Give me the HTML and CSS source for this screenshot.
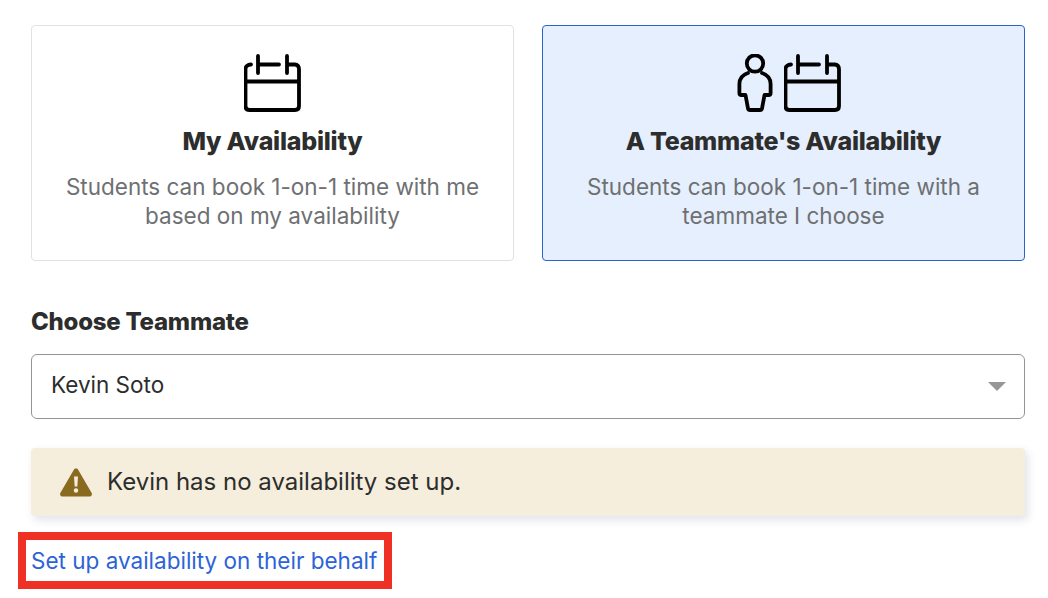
FILE: index.html
```html
<!DOCTYPE html>
<html lang="en">
<head>
<meta charset="utf-8">
<title>Availability</title>
<link rel="stylesheet" href="styles.css">
</head>
<body>
<main class="page">
  <section class="cards">
    <div class="card">
      <div class="icons">
        <svg class="cal" viewBox="1 0 58 58" fill="none"><path d="M8 10.500C4.500 10.500 2.500 12.500 2.500 15V52C2.500 54.500 4 56 6.500 56H52C54.500 56 56 54.500 56 52V15C56 12.500 54.500 10.500 52 10.500H44M15 2V19M44 2V19M15 10.500H36M2.500 27.500H56" stroke="#000" stroke-width="3.800" stroke-linecap="round" stroke-linejoin="round"/></svg>
      </div>
      <h2 class="card-title">My Availability</h2>
      <p class="card-text">Students can book 1-on-1 time with me based on my availability</p>
    </div>
    <div class="card selected">
      <div class="icons icons-pair">
        <svg class="person" viewBox="0 0 36 58" fill="none"><circle cx="18" cy="9.500" r="8.200" stroke="#000" stroke-width="3.800"/><path d="M11 19C5 21 2.400 25 2.400 30V39C2.400 40.500 3 41 4.500 41H8.500L11 54.500C11.300 55.700 12 56 13 56H23C24 56 24.700 55.700 25 54.500L27.500 41H31.500C33 41 33.600 40.500 33.600 39V30C33.600 25 31 21 25 19" stroke="#000" stroke-width="3.800" stroke-linecap="round" stroke-linejoin="round"/></svg>
        <svg class="cal" viewBox="1 0 58 58" fill="none"><path d="M8 10.500C4.500 10.500 2.500 12.500 2.500 15V52C2.500 54.500 4 56 6.500 56H52C54.500 56 56 54.500 56 52V15C56 12.500 54.500 10.500 52 10.500H44M15 2V19M44 2V19M15 10.500H36M2.500 27.500H56" stroke="#000" stroke-width="3.800" stroke-linecap="round" stroke-linejoin="round"/></svg>
      </div>
      <h2 class="card-title">A Teammate's Availability</h2>
      <p class="card-text">Students can book 1-on-1 time with a teammate I choose</p>
    </div>
  </section>
  <label class="label">Choose Teammate</label>
  <div class="select">
    <span class="select-value">Kevin Soto</span>
    <span class="caret"></span>
  </div>
  <div class="alert">
    <svg class="warn" viewBox="0 0 34 30"><path d="M17 1.500C18 1.500 18.800 2 19.300 2.900L32.700 26C33.500 27.500 32.500 29.500 30.700 29.500H3.300C1.500 29.500 .5 27.500 1.300 26L14.700 2.900C15.200 2 16 1.500 17 1.500Z" fill="#8a6a1f"/><path d="M15 9.500H19L18.300 19.500H15.700Z" fill="#f5eedc"/><circle cx="17" cy="23.500" r="2.200" fill="#f5eedc"/></svg>
    <span class="alert-text">Kevin has no availability set up.</span>
  </div>
  <a class="link" href="#">Set up availability on their behalf</a>
</main>
</body>
</html>
```
FILE: styles.css
```css
* { box-sizing: border-box; }
html, body { margin: 0; background: #fff; }
body { font-family: Inter, "Liberation Sans", sans-serif; color: #2d2d2d; }
.page { width: 1048px; height: 598px; padding: 25px 23px 0 31px; display: flex; flex-direction: column; overflow: hidden; }
.cards { display: flex; gap: 28px; }
.card { flex: 1 1 0; height: 236px; border: 1px solid #e2e2e2; border-radius: 4px; padding: 28px 20px 0; text-align: center; background: #fff; }
.card.selected { background: #e6effd; border-color: #2c64c6; }
.icons { display: flex; justify-content: center; align-items: flex-start; gap: 11px; height: 58px; }
.icons-pair { padding-left: 12px; }
.cal { width: 58px; height: 58px; display: block; }
.person { width: 36px; height: 58px; display: block; }
.card-title { margin: 13px 0 0; font-size: 25px; line-height: 32px; font-weight: 800; letter-spacing: -0.25px; }
.card-text { margin: 15px 0 0; font-size: 22.5px; line-height: 29px; color: #6e7072; }
.label { margin-top: 46px; font-size: 24px; line-height: 30px; font-weight: 800; letter-spacing: -0.25px; }
.select { margin-top: 17px; height: 65px; border: 1px solid #949494; border-radius: 6px; padding: 0 18px 0 19px; display: flex; align-items: center; justify-content: space-between; font-size: 22.5px; }
.select-value { margin-bottom: 4px; }
.caret { width: 0; height: 0; border-left: 9px solid transparent; border-right: 9px solid transparent; border-top: 9px solid #979797; }
.alert { margin-top: 29px; height: 68px; background: #f5eedc; border-radius: 4px; box-shadow: 3px 4px 8px rgba(70,80,120,.16); padding: 0 20px 0 28px; display: flex; align-items: center; gap: 14px; font-size: 24px; }
.alert-text { margin-bottom: 2px; }
.warn { width: 34px; height: 30px; flex: none; }
.link { align-self: flex-start; margin: 16px 0 0 -13px; height: 57px; border: 8px solid #ee3124; padding: 0 7px 0 5px; display: flex; align-items: center; color: #2c64d6; font-size: 22.5px; text-decoration: none; white-space: nowrap; }
```
